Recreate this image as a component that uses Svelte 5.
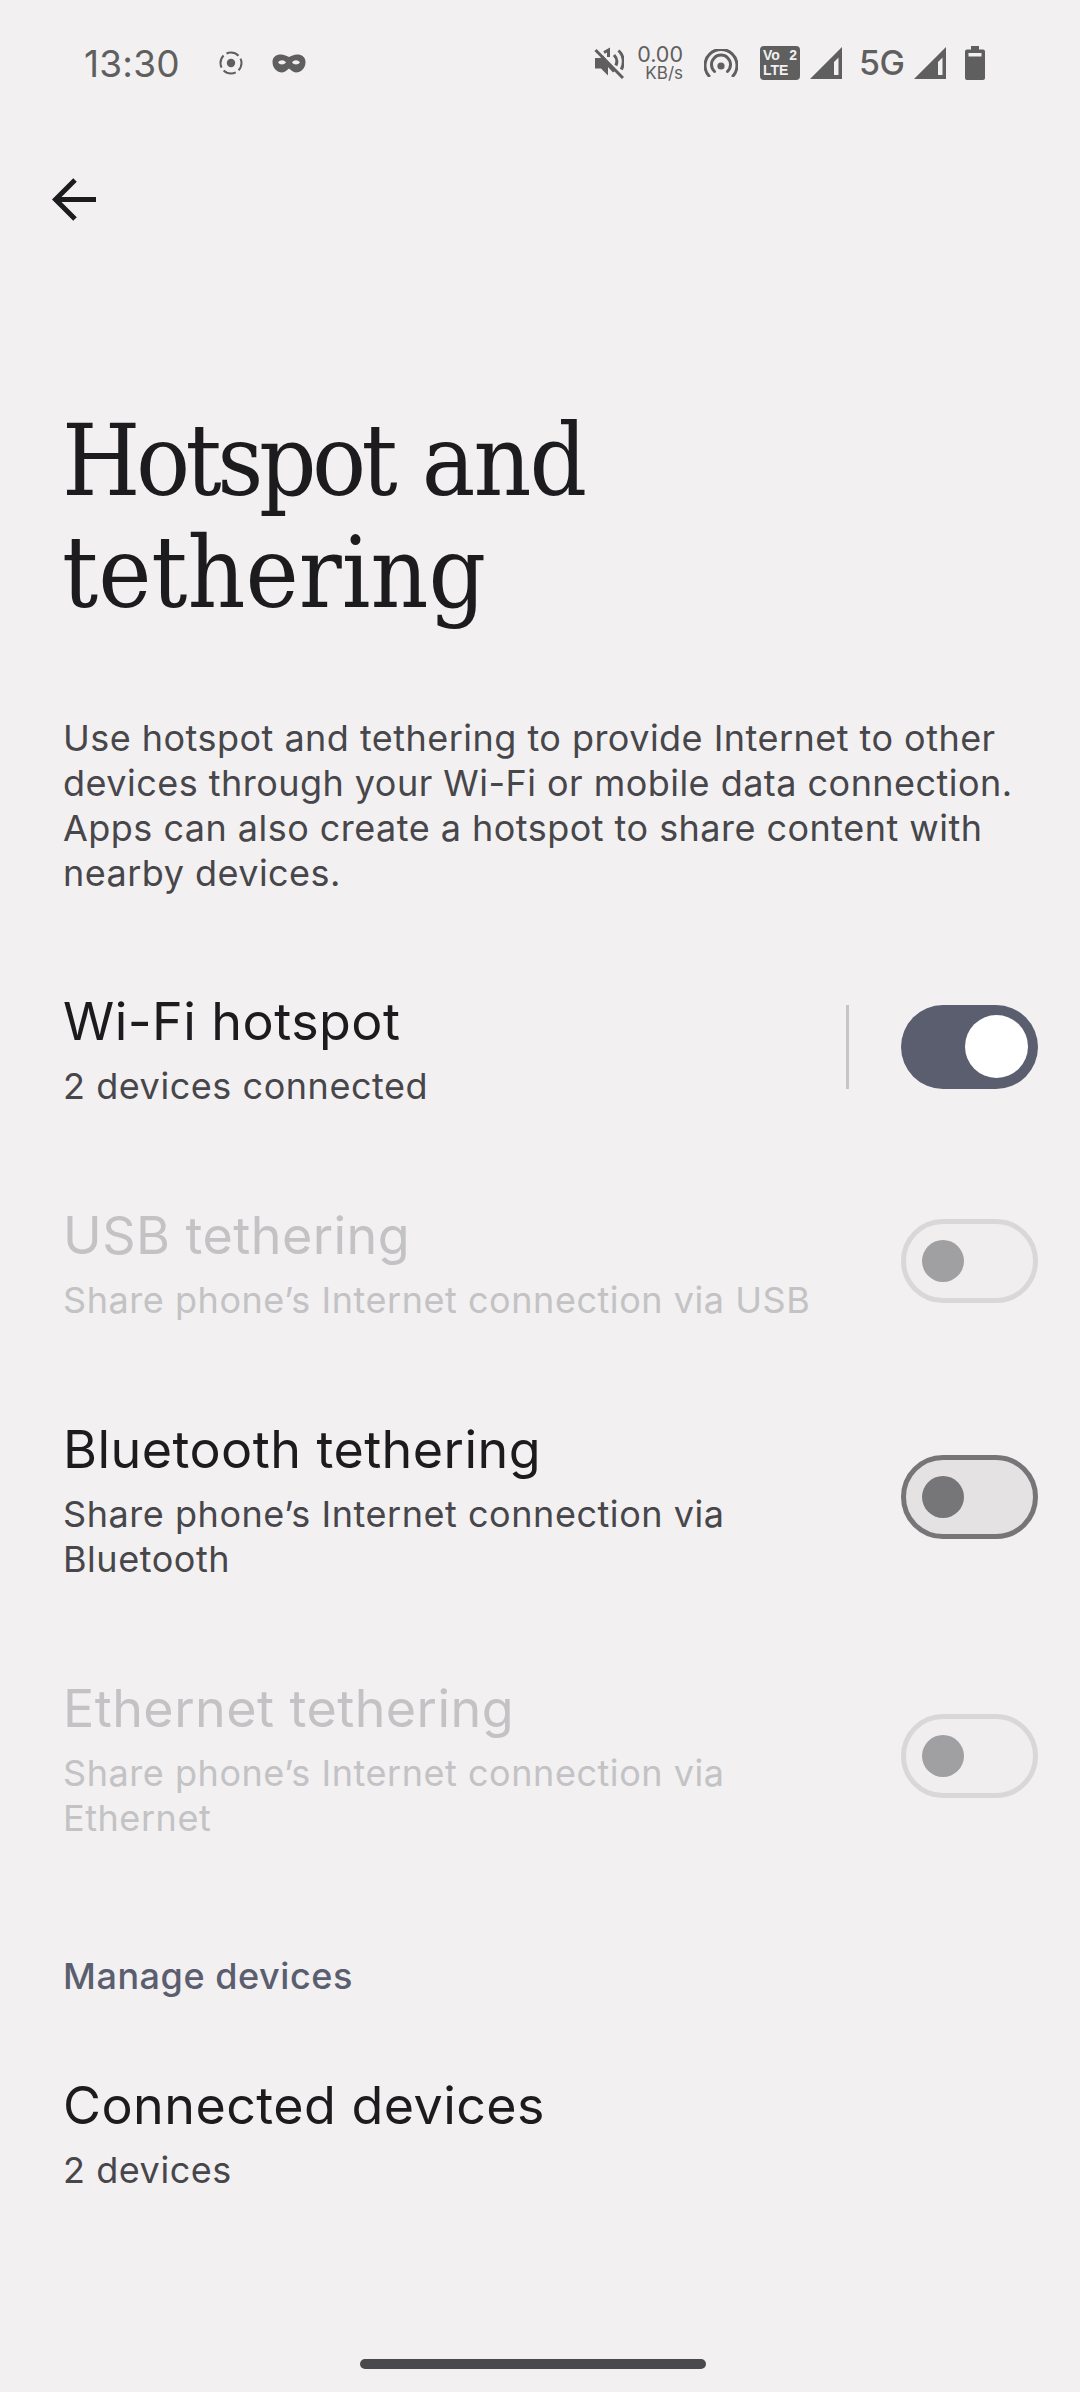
<script>
	const rows = [
		{ title: 'Wi-Fi hotspot', sub: '2 devices connected', state: 'on', divider: true },
		{ title: 'USB tethering', sub: 'Share phone’s Internet connection via USB', state: 'off', disabled: true },
		{ title: 'Bluetooth tethering', sub: 'Share phone’s Internet connection via Bluetooth', state: 'off' },
		{ title: 'Ethernet tethering', sub: 'Share phone’s Internet connection via Ethernet', state: 'off', disabled: true }
	];
</script>

<div class="screen">
	<header class="status">
		<span class="time">13:30</span>
		<svg class="ic-record" width="24" height="24" viewBox="0 0 24 24">
			<circle cx="12" cy="12" r="4.200" fill="#5f5f5f" />
			<circle cx="12" cy="12" r="10.500" fill="none" stroke="#5f5f5f" stroke-width="2" stroke-dasharray="13 3.500" stroke-dashoffset="5" />
		</svg>
		<svg class="ic-mask" width="34" height="19" viewBox="0 0 34 19">
			<path fill="#5f5f5f" fill-rule="evenodd" d="M9 .5C12 .5 15 2 17 3 19 2 22 .5 25 .5 30 .5 33.500 3 33.500 8 33.500 14 29 18.500 24 18.500 21 18.500 19 16 17 14.500 15 16 13 18.500 10 18.500 5 18.500 .5 14 .5 8 .5 3 4 .5 9 .5ZM6 8.500C8 5.500 12 5.500 14 8.500 12 11 8 11 6 8.500ZM28 8.500C26 5.500 22 5.500 20 8.500 22 11 26 11 28 8.500Z" />
		</svg>

		<div class="status-right">
			<svg class="ic-mute" width="30" height="32" viewBox="0 0 30 32">
				<path fill="#5f5f5f" d="M1 11h5.500L9 8.500 21 24l-2 1.500-5-5.500v8.500L7 21.500H1Z" />
				<path fill="none" stroke="#5f5f5f" stroke-width="3" d="M1.500 3 29 31M10 5.500 14.500 3v7M20 8c3 3 3.500 7 1.800 10.500M24.500 3.500c5.500 5 6 13 2.800 19" />
			</svg>
			<div class="speed"><span>0.00</span><span class="unit">KB/s</span></div>
			<svg class="ic-hotspot" width="34" height="28" viewBox="0 0 34 28">
				<circle cx="17" cy="17" r="3.600" fill="#5f5f5f" />
				<path fill="none" stroke="#5f5f5f" stroke-width="3" stroke-linecap="round" d="M10.500 22.500a9.500 9.500 0 1 1 13 0M5 27a16 16 0 1 1 24 0" />
			</svg>
			<div class="volte">
				<span class="vo">Vo<b>2</b></span>
				<span>LTE</span>
			</div>
			<svg class="ic-signal" width="32" height="32" viewBox="0 0 32 32">
				<path fill="#5f5f5f" fill-rule="evenodd" d="M0 32 32 0v32ZM24 28h4.500V10.500L24 15Z" />
			</svg>
			<span class="net">5G</span>
			<svg class="ic-signal" width="32" height="32" viewBox="0 0 32 32">
				<path fill="#5f5f5f" fill-rule="evenodd" d="M0 32 32 0v32ZM24 28h4.500V10.500L24 15Z" />
			</svg>
			<svg class="ic-battery" width="20" height="34" viewBox="0 0 20 34">
				<path fill="#5f5f5f" fill-rule="evenodd" d="M6 0h8v3.500h4a2 2 0 0 1 2 2V32a2 2 0 0 1-2 2H2a2 2 0 0 1-2-2V5.500a2 2 0 0 1 2-2h4ZM3.500 7v3.500h13V7Z" />
			</svg>
		</div>
	</header>

	<div class="toolbar">
		<svg width="44" height="44" viewBox="0 0 44 44">
			<path fill="none" stroke="#1c1b1d" stroke-width="5" d="M44 21.500H5M23 2 3.500 21.500 23 41" />
		</svg>
	</div>

	<h1><span class="tight">Hotspot</span> <span class="tight-and">and</span><br />tethering</h1>

	<p class="intro">Use hotspot and tethering to provide Internet to other devices through your Wi-Fi or mobile data connection. Apps can also create a hotspot to share content with nearby devices.</p>

	<div class="list">
		{#each rows as row}
			<div class="row" class:disabled={row.disabled}>
				<div class="text">
					<div class="title">{row.title}</div>
					<div class="sub">{row.sub}</div>
				</div>
				{#if row.divider}
					<div class="divider"></div>
				{/if}
				<div class="switch {row.state}"><span class="thumb"></span></div>
			</div>
		{/each}
	</div>

	<div class="section">Manage devices</div>

	<div class="row last">
		<div class="text">
			<div class="title">Connected devices</div>
			<div class="sub">2 devices</div>
		</div>
	</div>

	<div class="handle-wrap"><div class="handle"></div></div>
</div>

<style>
	:global(body) {
		margin: 0;
		background: #f2f0f1;
	}
	.screen {
		width: 1080px;
		height: 2392px;
		overflow: hidden;
		background: #f2f0f1;
		color: #1c1b1d;
		font-family: Inter, 'Liberation Sans', sans-serif;
		display: flex;
		flex-direction: column;
	}
	.status {
		height: 64px;
		padding: 31px 0 0 84px;
		display: flex;
		align-items: center;
		color: #5f5f5f;
	}
	.time {
		font-size: 37px;
		width: 135px;
		letter-spacing: 0.2px;
	}
	.ic-mask {
		margin-left: 29px;
	}
	.status-right {
		margin-left: auto;
		margin-right: 95px;
		display: flex;
		align-items: center;
	}
	.speed {
		width: 45px;
		margin-left: 14px;
		display: flex;
		flex-direction: column;
		align-items: flex-end;
		font-size: 21.500px;
		line-height: 21px;
	}
	.speed .unit {
		font-size: 17px;
		line-height: 17px;
	}
	.ic-hotspot {
		margin-left: 21px;
	}
	.volte {
		margin-left: 22px;
		width: 40px;
		height: 34px;
		box-sizing: border-box;
		padding: 2px 3px;
		border-radius: 4px;
		background: #5f5f5f;
		color: #f2f0f1;
		font-family: 'Liberation Sans', sans-serif;
		font-size: 14px;
		font-weight: 700;
		line-height: 15px;
		display: flex;
		flex-direction: column;
	}
	.vo {
		display: flex;
		justify-content: space-between;
	}
	.ic-signal {
		margin-left: 10px;
	}
	.net {
		width: 42px;
		margin-left: 17px;
		margin-right: 3px;
		font-size: 34px;
		font-weight: 500;
		line-height: 40px;
		letter-spacing: -0.5px;
		white-space: nowrap;
	}
	.ic-battery {
		margin-left: 19px;
	}
	.toolbar {
		height: 44px;
		margin-top: 83px;
		padding-left: 52px;
	}
	h1 {
		margin: 183px 0 0 62px;
		font-family: 'DejaVu Serif Condensed', 'DejaVu Serif', serif;
		font-stretch: condensed;
		font-size: 100px;
		font-weight: 400;
		line-height: 112px;
	}
	.tight {
		letter-spacing: -4.500px;
	}
	.tight-and {
		letter-spacing: -2px;
	}
	.intro {
		margin: 87px 50px 0 63px;
		font-size: 36px;
		line-height: 45px;
		color: #47464a;
		letter-spacing: 0.47px;
	}
	.list {
		margin-top: 43px;
	}
	.row {
		display: flex;
		align-items: center;
		padding: 45px 42px 44px 63px;
	}
	.text {
		flex: 1;
		min-width: 0;
		max-width: 760px;
	}
	.title {
		font-size: 52px;
		line-height: 75px;
		margin-bottom: 5px;
		letter-spacing: 0.45px;
	}
	.sub {
		font-size: 36px;
		line-height: 45px;
		color: #47464a;
		letter-spacing: 0.55px;
	}
	.disabled .title,
	.disabled .sub {
		color: #c3c2c4;
	}
	.divider {
		width: 3px;
		height: 84px;
		background: #c6c5c7;
		margin-left: auto;
		margin-right: 52px;
	}
	.switch {
		width: 137px;
		height: 84px;
		box-sizing: border-box;
		border-radius: 42px;
		margin-left: auto;
		display: flex;
		align-items: center;
		flex-shrink: 0;
	}
	.divider + .switch {
		margin-left: 0;
	}
	.on {
		background: #5a5e6e;
		justify-content: flex-end;
		padding-right: 10px;
	}
	.on .thumb {
		width: 63px;
		height: 63px;
		border-radius: 50%;
		background: #fff;
	}
	.off {
		border: 5px solid #767577;
		background: #e4e2e3;
		padding-left: 16px;
	}
	.off .thumb {
		width: 42px;
		height: 42px;
		border-radius: 50%;
		background: #767577;
	}
	.disabled .off {
		border-color: #d9d7d9;
		background: #f0eeef;
	}
	.disabled .off .thumb {
		background: #a09fa1;
	}
	.section {
		margin: 66px 0 0 63px;
		font-size: 36px;
		font-weight: 500;
		line-height: 50px;
		letter-spacing: 0.55px;
		color: #5a5e6e;
	}
	.last {
		padding-top: 67px;
	}
	.handle-wrap {
		margin-top: auto;
		padding-bottom: 23px;
		display: flex;
		justify-content: center;
	}
	.handle {
		width: 346px;
		height: 10px;
		border-radius: 5px;
		background: #4a4a4c;
		margin-right: 14px;
	}
</style>
